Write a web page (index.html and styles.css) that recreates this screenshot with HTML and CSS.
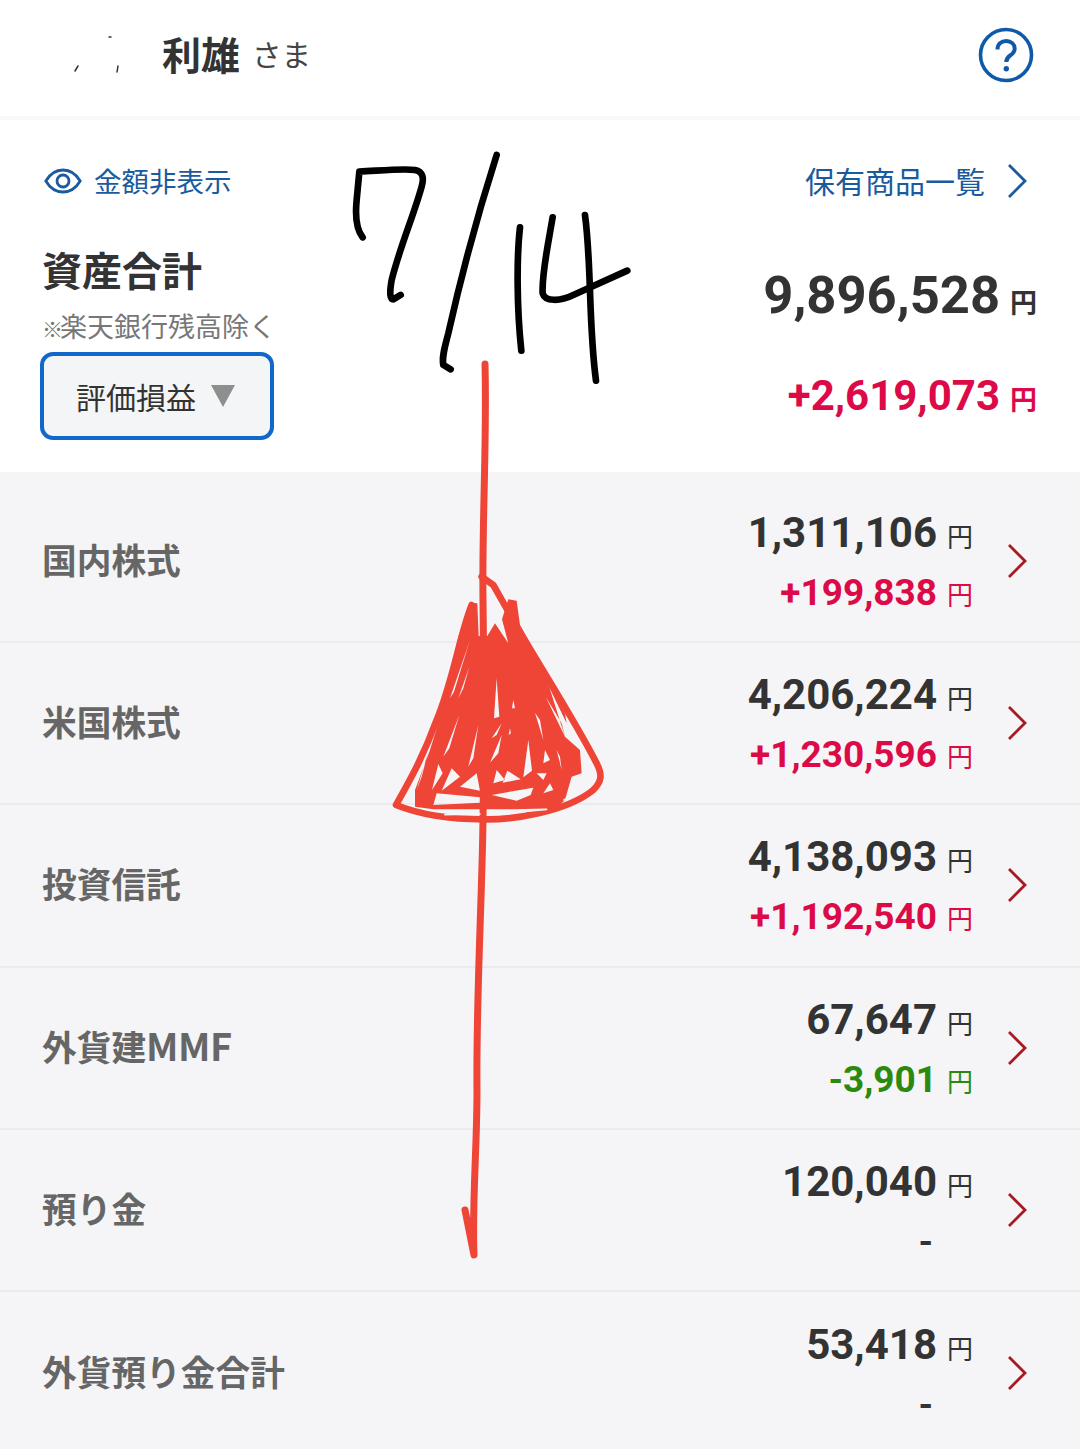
FILE: index.html
```html
<!DOCTYPE html>
<html lang="ja">
<head>
<meta charset="utf-8">
<title>資産合計</title>
<link rel="stylesheet" href="styles.css">
</head>
<body>
<div class="page">
  <header class="header">
    <div class="user"><span class="name">利雄</span><span class="honorific">さま</span></div>
    <svg class="help" width="56" height="56" viewBox="0 0 56 56" fill="none" stroke="#0f5aa8"><circle cx="28" cy="28" r="25.500" stroke-width="3.600"/><path d="M19.500 22.500c0-5.200 3.800-8.500 8.700-8.500 5 0 8.500 3.200 8.500 7.400 0 3.400-1.900 5.300-4.600 7.100-2.500 1.700-3.800 3.200-3.800 6.500" stroke-width="4"/><circle cx="28.300" cy="41.800" r="2.700" fill="#0f5aa8" stroke="none"/></svg>
  </header>

  <section class="summary">
    <div class="links">
      <a class="link"><svg class="eye" width="38" height="26" viewBox="0 0 38 26" fill="none" stroke="#1a5a9e" stroke-width="2.800"><path d="M1.800 13C6 6 12 2 19 2s13 4 17.200 11C32 20 26 24 19 24S6 20 1.800 13z"/><circle cx="19" cy="13" r="6"/></svg><span class="link-text">金額非表示</span></a>
      <a class="link link-list"><span class="link-text">保有商品一覧</span><svg class="chevron" width="20" height="34" viewBox="0 0 20 34" fill="none" stroke="#1a5a9e" stroke-width="2.800"><path d="M2 1l16 16L2 33"/></svg></a>
    </div>
    <div class="summary-body">
      <div class="summary-left">
        <h1 class="title">資産合計</h1>
        <p class="note"><span class="mark">※</span>楽天銀行残高除く</p>
        <div class="select"><span>評価損益</span><i class="caret"></i></div>
      </div>
      <div class="summary-right">
        <div class="total">9,896,528<span class="total-yen">円</span></div>
        <div class="gain">+2,619,073<span class="total-yen">円</span></div>
      </div>
    </div>
  </section>

  <main class="list">
    <div class="row"><div class="label">国内株式</div><div class="vals"><div class="amount">1,311,106<span class="yen">円</span></div><div class="diff plus">+199,838<span class="yen">円</span></div></div><svg class="chevron" width="20" height="34" viewBox="0 0 20 34" fill="none" stroke="#a81a22" stroke-width="2.800"><path d="M2 1l16 16L2 33"/></svg></div>
    <div class="row"><div class="label">米国株式</div><div class="vals"><div class="amount">4,206,224<span class="yen">円</span></div><div class="diff plus">+1,230,596<span class="yen">円</span></div></div><svg class="chevron" width="20" height="34" viewBox="0 0 20 34" fill="none" stroke="#a81a22" stroke-width="2.800"><path d="M2 1l16 16L2 33"/></svg></div>
    <div class="row"><div class="label">投資信託</div><div class="vals"><div class="amount">4,138,093<span class="yen">円</span></div><div class="diff plus">+1,192,540<span class="yen">円</span></div></div><svg class="chevron" width="20" height="34" viewBox="0 0 20 34" fill="none" stroke="#a81a22" stroke-width="2.800"><path d="M2 1l16 16L2 33"/></svg></div>
    <div class="row"><div class="label">外貨建<span class="latin">MMF</span></div><div class="vals"><div class="amount">67,647<span class="yen">円</span></div><div class="diff minus">-3,901<span class="yen">円</span></div></div><svg class="chevron" width="20" height="34" viewBox="0 0 20 34" fill="none" stroke="#a81a22" stroke-width="2.800"><path d="M2 1l16 16L2 33"/></svg></div>
    <div class="row"><div class="label">預り金</div><div class="vals"><div class="amount">120,040<span class="yen">円</span></div><div class="diff none">-<span class="yen"></span></div></div><svg class="chevron" width="20" height="34" viewBox="0 0 20 34" fill="none" stroke="#a81a22" stroke-width="2.800"><path d="M2 1l16 16L2 33"/></svg></div>
    <div class="row"><div class="label">外貨預り金合計</div><div class="vals"><div class="amount">53,418<span class="yen">円</span></div><div class="diff none">-<span class="yen"></span></div></div><svg class="chevron" width="20" height="34" viewBox="0 0 20 34" fill="none" stroke="#a81a22" stroke-width="2.800"><path d="M2 1l16 16L2 33"/></svg></div>
  </main>

  <svg class="ink" width="1080" height="1449" viewBox="0 0 1080 1449" fill="none" stroke-linecap="round" stroke-linejoin="round">
    <g stroke="#333" stroke-width="1.500"><path d="M78 66l-3 5M118 66l-1 6M109 37h2"/></g>
    <g transform="translate(340 140) scale(.3333)" stroke="#000" stroke-width="20">
      <path d="M68 292C50 270 45 230 50 180L58 95C120 92 190 85 225 90 250 95 252 115 245 140 220 230 180 320 155 420 148 460 150 478 160 478L182 465"/>
      <path d="M470 45C430 170 370 380 325 580 315 620 305 650 310 675L332 688"/>
      <path d="M540 262C530 350 530 500 544 632"/>
      <path d="M638 232C625 310 605 400 608 460 615 485 660 485 700 465L862 392"/>
      <path d="M735 225C755 370 745 550 768 722"/>
    </g>
    <g stroke="#ee4537">
      <path stroke-width="7" d="M485 364C487 440 482 520 483 600 484 680 484 760 483 820 482 900 476 1000 477 1090 477 1150 472 1200 474 1255L465 1210"/>
      <g transform="translate(380 560) scale(.3333)">
        <path stroke-width="20" d="M305 50L340 75 405 190C480 320 590 490 650 610 668 645 665 665 640 690 560 755 400 780 310 778 200 778 110 760 48 735 90 660 130 590 170 480 220 360 240 220 275 135"/>
        <path fill="#ee4537" stroke="none" fill-rule="evenodd" d="M270 128L292 130 296 228 322 228 345 190 385 250 366 178 385 118 410 122 420 195 490 325 555 530 600 570 605 640 575 650 555 720 530 745 400 748 160 748 105 740 105 690 150 570 190 440 235 230Z
        M270 240L210 415 222 395Z M268 320L235 415 250 385Z M350 355L342 475 358 470Z M400 420L396 445 405 445Z M465 458L490 540 480 480Z M238 465L190 590 208 565Z M295 495L265 620 280 595Z M365 490L335 535 350 525Z M390 505L386 525 393 520Z M365 525L330 608 355 580Z M445 540L430 652 456 632Z M490 345L560 490 555 460Z M497 410L555 530 545 490Z M495 570L490 610 510 600Z M530 570L545 630 540 590Z
        M175 612L156 690 188 640Z M215 625L185 692 240 650Z M290 640L240 680 300 692Z M350 630L340 670 375 660Z M382 632L368 668 422 658Z
        M160 735L300 728 300 712 170 700Z M335 705L460 683 452 705 410 722Z M470 640L500 640 490 660Z M510 670L490 700 520 690Z M145 575L110 690 125 650Z"/>
        <path stroke="#f5f5f8" stroke-width="5" d="M195 764L300 762M330 764L500 748M552 720L640 665"/>
      </g>
    </g>
  </svg>
</div>
</body>
</html>
```
FILE: styles.css
```css
* { box-sizing: border-box; }
html, body { margin: 0; padding: 0; background: #fff; }
body {
  font-family: Roboto, "Noto Sans CJK JP", sans-serif;
  color: #333;
}
.page {
  position: relative;
  width: 1080px;
  height: 1449px;
  overflow: hidden;
  background: #fff;
}
.header {
  height: 120px;
  padding: 0 46px 7px 162px;
  display: flex;
  align-items: center;
  justify-content: space-between;
  border-bottom: 4px solid #f8f8f8;
}
.user { display: flex; align-items: center; gap: 12px; margin-top: -4px; }
.name, .honorific, .link, .title, .note, .select, .label, .yen, .total-yen {
  font-family: "Noto Sans CJK JP", sans-serif;
}
.name { font-size: 39px; font-weight: 700; line-height: 56px; color: #333; }
.honorific { font-size: 29.500px; line-height: 56px; color: #444; }

.summary { padding: 42px 43px 31px 42px; height: 352px; }
.links { display: flex; justify-content: space-between; align-items: center; height: 38px; padding-right: 10px; }
.link { display: flex; align-items: center; font-size: 27.500px; color: #1a5a9e; line-height: 36px; }
.link-text { margin-top: -2px; }
.link-list { font-size: 30px; }
.link-list .link-text { margin-top: -3px; }
.eye { margin: 0 12px 0 2px; }
.link-list .chevron { margin-left: 22px; }

.summary-body { display: flex; justify-content: space-between; }
.title { margin: 45px 0 0; font-size: 40px; font-weight: 700; line-height: 48px; color: #333; }
.note { margin: 15px 0 0; height: 36px; font-size: 27px; line-height: 36px; color: #777; }
.mark { font-size: 21px; line-height: 1; letter-spacing: -3px; }
.select {
  width: 234px;
  height: 88px;
  margin: 8px 0 0 -2px;
  padding-left: 32px;
  display: flex;
  align-items: center;
  gap: 15px;
  background: #f4f5f7;
  border: 4px solid #1268c8;
  border-radius: 13px;
  font-size: 30px;
  color: #333;
}
.caret {
  width: 0;
  height: 0;
  border-left: 12px solid transparent;
  border-right: 12px solid transparent;
  border-top: 22px solid #8e8e8e;
}
.summary-right { display: flex; flex-direction: column; align-items: flex-end; }
.total { margin-top: 65px; font-size: 52.500px; font-weight: 700; line-height: 60px; color: #333; }
.gain { margin-top: 39px; font-size: 42px; font-weight: 700; line-height: 50px; color: #dc0a47; }
.total-yen { font-size: 27px; font-weight: 700; margin-left: 10px; }

.list { padding-top: 8.750px; background: #f5f5f8; height: 977px; }
.row {
  height: 162.250px;
  padding: 0 53px 0 42px;
  display: flex;
  align-items: center;
  border-bottom: 2px solid #ebebee;
}
.row:last-child { border-bottom: 0; }
.label { flex: 1; font-size: 34.700px; font-weight: 700; color: #666; margin-top: -4px; }
.latin { font-size: 38px; line-height: 1; letter-spacing: -.5px; }
.vals { display: flex; flex-direction: column; align-items: flex-end; gap: 10px; margin: 4px 34px 0 0; }
.amount { font-size: 42px; font-weight: 700; line-height: 50px; color: #333; white-space: nowrap; }
.diff { font-size: 37px; font-weight: 700; line-height: 50px; white-space: nowrap; }
.yen {
  display: inline-block;
  width: 26px;
  margin-left: 10px;
  font-size: 26px;
  font-weight: 400;
  line-height: 1;
}
.plus { color: #dc0a47; }
.minus { color: #2b8a0e; }
.none { color: #333; padding-right: 4px; }
.ink { position: absolute; top: 0; left: 0; pointer-events: none; }
```
